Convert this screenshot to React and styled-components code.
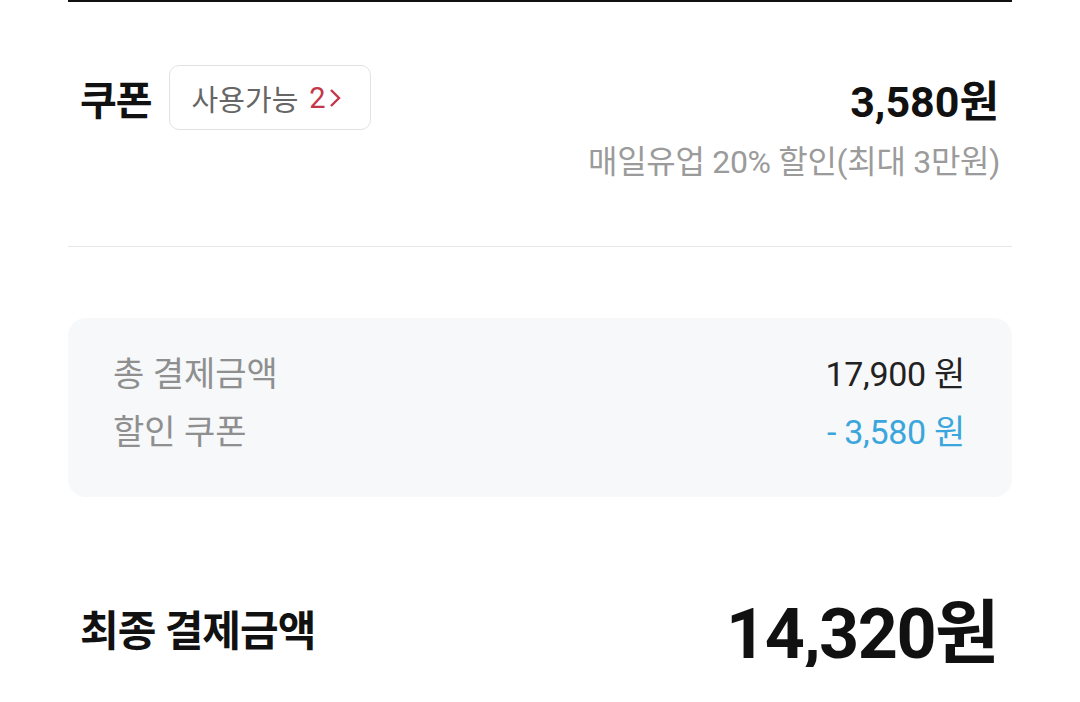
import React from 'react'
import styled, { createGlobalStyle } from 'styled-components'

const GlobalStyle = createGlobalStyle`
  html, body {
    margin: 0;
    padding: 0;
    background: #fff;
  }
  body {
    font-family: Roboto, "Noto Sans CJK KR", sans-serif;
    color: #111;
  }
`
const Wrapper = styled.div`
  margin: 0 68px;
  border-top: 2px solid #111;
`
const CouponSection = styled.section`
  padding: 63px 0 66px;
  border-bottom: 1px solid #e6e6e6;
`
const HeaderRow = styled.div`
  display: flex;
  align-items: center;
  justify-content: space-between;
  height: 65px;
`
const Left = styled.div`
  display: flex;
  align-items: center;
`
const Title = styled.h2`
  margin: 0 17px 0 12px;
  font-size: 40px;
  font-weight: 700;
  letter-spacing: -1px;
`
const Badge = styled.button`
  display: flex;
  align-items: center;
  gap: 2px;
  height: 65px;
  padding: 0 28px 0 22px;
  background: #fff;
  border: 1px solid #e2e2e2;
  border-radius: 10px;
  font-family: inherit;
  font-size: 29px;
  color: #666;
`
const Count = styled.span`
  margin-left: 9px;
  color: #c4374a;
`
const Price = styled.div`
  margin-right: 13px;
  font-size: 43px;
  font-weight: 700;
`
const Sub = styled.div`
  margin: 14px 12px 0 0;
  text-align: right;
  font-size: 32px;
  line-height: 36px;
  color: #9b9b9b;
  letter-spacing: -0.3px;
`
const SummaryBox = styled.div`
  margin-top: 71px;
  padding: 27px 47px 36px 45px;
  background: #f6f8fa;
  border-radius: 18px;
`
const SummaryRow = styled.div`
  display: flex;
  justify-content: space-between;
  font-size: 34px;
  line-height: 58px;
`
const Label = styled.span`
  color: #8f8f8f;
`
const Amount = styled.span`
  font-size: 34px;
  color: ${(props) => (props.$discount ? '#3ba6db' : '#222')};
  letter-spacing: -0.3px;
`
const FinalRow = styled.div`
  display: flex;
  align-items: center;
  justify-content: space-between;
  margin-top: 90px;
  height: 80px;
`
const FinalTitle = styled.h2`
  margin: 0 0 0 12px;
  font-size: 42px;
  font-weight: 700;
  letter-spacing: -1px;
`
const FinalPrice = styled.div`
  margin-right: 14px;
  font-size: 70px;
  font-weight: 700;
  letter-spacing: -1.5px;
`
const Chevron = () => (
  <svg width="14" height="22" viewBox="0 0 14 22" fill="none">
    <path d="M3 3l8 8-8 8" stroke="#c4374a" strokeWidth="2.4" />
  </svg>
)

export default function App() {
  return (
    <>
      <GlobalStyle />
      <Wrapper>
        <CouponSection>
          <HeaderRow>
            <Left>
              <Title>쿠폰</Title>
              <Badge>
                사용가능<Count>2</Count>
                <Chevron />
              </Badge>
            </Left>
            <Price>3,580원</Price>
          </HeaderRow>
          <Sub>매일유업 20% 할인(최대 3만원)</Sub>
        </CouponSection>
        <SummaryBox>
          <SummaryRow>
            <Label>총 결제금액</Label>
            <Amount>17,900 원</Amount>
          </SummaryRow>
          <SummaryRow>
            <Label>할인 쿠폰</Label>
            <Amount $discount>- 3,580 원</Amount>
          </SummaryRow>
        </SummaryBox>
        <FinalRow>
          <FinalTitle>최종 결제금액</FinalTitle>
          <FinalPrice>14,320원</FinalPrice>
        </FinalRow>
      </Wrapper>
    </>
  )
}
